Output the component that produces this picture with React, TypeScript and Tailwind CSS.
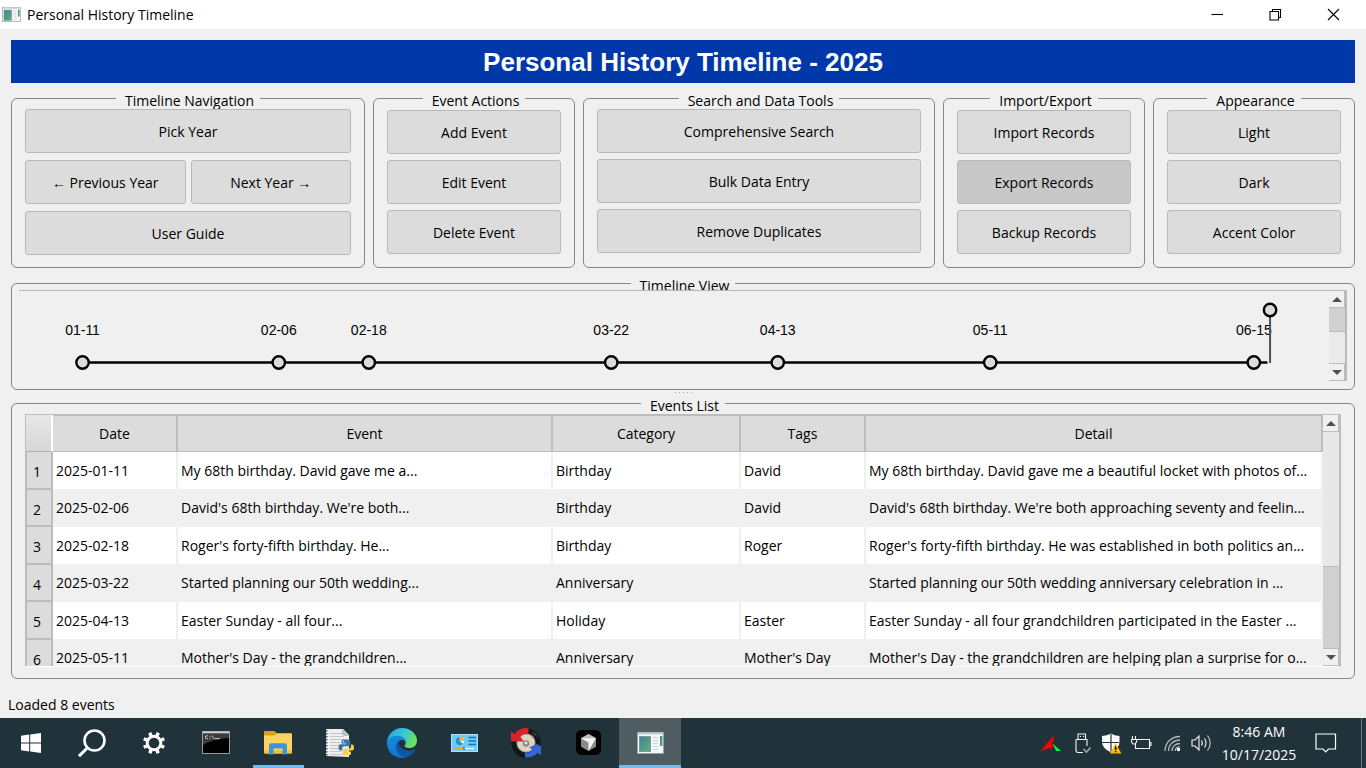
import type { ReactNode } from 'react';

const nodes = [
  { date: '01-11', x: 4.85 },
  { date: '02-06', x: 19.83 },
  { date: '02-18', x: 26.7 },
  { date: '03-22', x: 45.21 },
  { date: '04-13', x: 57.92 },
  { date: '05-11', x: 74.14 },
  { date: '06-15', x: 94.26 },
];

const events = [
  ['2025-01-11', 'My 68th birthday. David gave me a...', 'Birthday', 'David', 'My 68th birthday. David gave me a beautiful locket with photos of...'],
  ['2025-02-06', "David's 68th birthday. We're both...", 'Birthday', 'David', "David's 68th birthday. We're both approaching seventy and feelin..."],
  ['2025-02-18', "Roger's forty-fifth birthday. He...", 'Birthday', 'Roger', "Roger's forty-fifth birthday. He was established in both politics an..."],
  ['2025-03-22', 'Started planning our 50th wedding...', 'Anniversary', '', 'Started planning our 50th wedding anniversary celebration in ...'],
  ['2025-04-13', 'Easter Sunday - all four...', 'Holiday', 'Easter', 'Easter Sunday - all four grandchildren participated in the Easter ...'],
  ['2025-05-11', "Mother's Day - the grandchildren...", 'Anniversary', "Mother's Day", "Mother's Day - the grandchildren are helping plan a surprise for o..."],
];

function Group({ title, className = '', children }: { title: string; className?: string; children: ReactNode }) {
  return (
    <section className={`flex min-w-0 flex-col rounded-md border border-[#868686] ${className}`}>
      <h2 className="mx-auto -mt-2 w-fit bg-[#f0f0f0] pr-1.5 pl-[9px] leading-5">{title}</h2>
      {children}
    </section>
  );
}

function Btn({ children, active = false }: { children: ReactNode; active?: boolean }) {
  return (
    <button
      type="button"
      className={`h-11 min-w-0 flex-auto basis-11 rounded-[3px] border border-[#b8b8b8] pt-px ${active ? 'bg-[#c8c8c8]' : 'bg-[#dcdcdc]'}`}
    >
      {children}
    </button>
  );
}

function Stack({ className = '', children }: { className?: string; children: ReactNode }) {
  return <div className={`relative flex flex-col px-[13px] pb-3 ${className}`}>{children}</div>;
}

function Arrow({ down = false }: { down?: boolean }) {
  return (
    <button
      type="button"
      aria-label={down ? 'Scroll down' : 'Scroll up'}
      className="flex h-[17px] w-4 shrink-0 items-center justify-center border-r border-b border-[#bdbdbd] bg-[#f0f0f0]"
    >
      <svg width="10" height="5" viewBox="0 0 10 5" fill="#505050">
        <path d={down ? 'M0 0H10L5 5Z' : 'M0 5H10L5 0Z'} />
      </svg>
    </button>
  );
}

function WindowIcon({ w, h }: { w: number; h: number }) {
  return (
    <svg width={w} height={h} viewBox="0 0 27 22">
      <defs>
        <linearGradient id="pane" x1="0" y1="0" x2="1" y2="1">
          <stop offset="0" stopColor="#3f7f9e" />
          <stop offset="1" stopColor="#63b36f" />
        </linearGradient>
      </defs>
      <rect x="0.5" y="0.5" width="26" height="21" fill="#f6f6f6" stroke="#98a1a8" />
      <path d="M1 1.5H26" stroke="#c6ced4" strokeWidth="2" />
      <rect x="2.5" y="4.5" width="11" height="15" fill="url(#pane)" stroke="#7d989c" />
      <path d="M16 5.5h5M16 8.5h5M16 11.5h5M16 14.5h5M16 17.5h5" stroke="#cfcfcf" />
      <rect x="23" y="4" width="2.5" height="10" fill="url(#pane)" />
    </svg>
  );
}

function WindowsLogo() {
  return (
    <svg width="20" height="20" viewBox="0 0 20 20" fill="#fff">
      <path d="M0 2.8 8.2 1.6V9.5H0ZM9.2 1.5 20 0V9.5H9.2ZM0 10.5H8.2V18.4L0 17.2ZM9.2 10.5H20V20L9.2 18.5Z" />
    </svg>
  );
}

function SearchIcon() {
  return (
    <svg width="28" height="28" viewBox="0 0 28 28" fill="none" stroke="#fff" strokeWidth="2.6">
      <circle cx="16.5" cy="11.5" r="10" />
      <path d="M9.5 18.8 1 27.2" strokeWidth="3" />
    </svg>
  );
}

function GearIcon() {
  return (
    <svg width="24" height="24" viewBox="0 0 24 24" fill="none" stroke="#fff">
      <circle cx="12" cy="12" r="6.8" strokeWidth="3" />
      {[22.5, 67.5, 112.5, 157.5, 202.5, 247.5, 292.5, 337.5].map((a) => (
        <path key={a} d="M12 4.5V0.9" strokeWidth="3.4" transform={`rotate(${a} 12 12)`} />
      ))}
    </svg>
  );
}

function TerminalIcon() {
  return (
    <svg width="28" height="23" viewBox="0 0 28 23">
      <rect x="0.5" y="0.5" width="27" height="22" fill="#000" stroke="#9b9b9b" />
      <path d="M1 1.5H27" stroke="#c9ced2" strokeWidth="2" />
      <path d="M1 3H27V7Q10 8 1 14Z" fill="#3c3c3c" />
      <path d="M6 4.9H4.4Q3.4 4.9 3.4 6.1T4.4 7.5H6M8 5.2v.8M8 7v.8M9.7 4.5 12 7.8M12.5 7.7H18" stroke="#ddd" strokeWidth="0.9" fill="none" />
    </svg>
  );
}

function FolderIcon() {
  return (
    <svg width="28" height="24" viewBox="0 0 28 24">
      <path d="M0 1Q0 0 1 0H10.5L13 2.3H27Q28 2.3 28 3.3V10H0Z" fill="#e0a012" />
      <path d="M0 4.5H10.5L13 2.4H27Q28 2.4 28 3.4V21.5Q28 22.5 27 22.5H1Q0 22.5 0 21.5Z" fill="#ffd35c" />
      <path d="M0 19.5H28V21.5Q28 22.5 27 22.5H1Q0 22.5 0 21.5Z" fill="#f5bd36" />
      <path d="M5 23.5V14.5Q5 12.3 7.2 12.3H20.8Q23 12.3 23 14.5V23.5H18.5V17.5H9.5V23.5Z" fill="#3c95dc" />
    </svg>
  );
}

function PythonFileIcon() {
  return (
    <svg width="30" height="30" viewBox="0 0 30 30">
      <path d="M1 1H18L24 7V29L1 28Z" fill="#efefef" />
      <path d="M17 1 24 8H20Q17 8 17 5Z" fill="#bdbdbd" />
      <path d="M5 5.5H17M5 8.5H19M5 11.5H20M5 14.5H15M5 17.5H14M5 20.5H14M5 23.5H16M5 26.5H19" stroke="#c2c5c8" />
      <path d="M1.8 2V28" stroke="#555" strokeWidth="1.4" strokeDasharray="1.5 1.5" />
      <path d="M22 11.5H18.5Q16.5 11.5 16.5 13.5V15.5H21V16.3H15.5Q13.5 16.3 13.5 19.3T15.5 22.5H17.3V20.4Q17.3 18.2 19.5 18.2H23.4Q25.2 18.2 25.2 16.2V13.5Q25.2 11.5 22 11.5Z" fill="#3873a5" />
      <path d="M20.5 27.5H23.5Q26 27.5 26 25.5V23.4H21.5V22.6H27Q29 22.6 29 19.6T27 16.4H25.9V18.5Q25.9 20.7 23.6 20.7H19.6Q17.8 20.7 17.8 22.7V25.5Q17.8 27.5 20.5 27.5Z" fill="#ffce3d" />
      <circle cx="18.5" cy="13.5" r="0.8" fill="#fff" />
      <circle cx="24.2" cy="25.4" r="0.8" fill="#fff" />
    </svg>
  );
}

function EdgeIcon() {
  return (
    <svg width="30" height="30" viewBox="0 0 30 30">
      <defs>
        <linearGradient id="edgeTop" x1="0" y1="0.2" x2="1" y2="0.6">
          <stop offset="0" stopColor="#2aa3e0" />
          <stop offset="0.5" stopColor="#35c6d3" />
          <stop offset="1" stopColor="#6fe356" />
        </linearGradient>
        <linearGradient id="edgeLeft" x1="0" y1="0" x2="0.5" y2="1">
          <stop offset="0" stopColor="#1592df" />
          <stop offset="1" stopColor="#1270c8" />
        </linearGradient>
      </defs>
      <path d="M15 0C23.5 0 30 6 30 12.5C30 17 27 20 22.8 20C19.5 20 17.6 18.8 17.6 17.9C17.6 17.2 18.7 16.6 18.7 14.8C18.7 11.5 15.5 8.5 10.5 8.5C5.5 8.5 1.5 11.5 0 14.5C.5 6.2 7 0 15 0Z" fill="url(#edgeTop)" />
      <path d="M0 15C0 11 4.8 7.8 10.3 7.8C15.5 7.8 18.8 11 18.8 14.5C18.2 12.9 16.8 12 15 12C12 12 9.5 15 9.5 18.8C9.5 24 14 28.8 19.8 29.2C18.2 29.8 16.7 30 15 30C6.8 30 0 23.5 0 15Z" fill="url(#edgeLeft)" />
      <path d="M11.8 13.5C10.4 14.8 9.2 17 9.2 19.3C9.2 24.2 13.3 29 19.5 29.3C23.3 28 26.4 25.5 28.1 22.6C28.5 21.8 28 21.3 27.2 21.7C25.7 22.4 24.2 22.7 22.5 22.7C16.5 22.7 11.6 18.7 11.6 15Z" fill="#0d57a6" />
    </svg>
  );
}

function PanelIcon() {
  return (
    <svg width="27" height="18" viewBox="0 0 27 18">
      <rect x="0.5" y="0.5" width="26" height="17" fill="#6ecbf7" stroke="#a9e2fb" />
      <circle cx="8.8" cy="7" r="4.3" fill="#f3fbff" />
      <path d="M8.8 7V2.7A4.3 4.3 0 1 0 12 9.8Z" fill="#2493d6" />
      <path d="M8.8 7V2.7A4.3 4.3 0 0 1 13.1 7Z" fill="#f7b52c" />
      <path d="M17.5 3.5H25M17.5 7H25M17.5 10.5H25" stroke="#1976b8" strokeWidth="1.6" />
      <path d="M4 14.5H13" stroke="#f6a21c" strokeWidth="1.6" />
      <path d="M13 14.5H23" stroke="#eefaff" strokeWidth="1.4" />
      <path d="M13 13v3" stroke="#1976b8" strokeWidth="1.4" />
    </svg>
  );
}

function SyncDiscIcon() {
  return (
    <svg width="30" height="30" viewBox="0 0 30 30">
      <circle cx="15" cy="15" r="12.2" fill="none" stroke="#15181a" strokeWidth="5" />
      <circle cx="15" cy="15" r="9" fill="#ddd4c2" />
      <circle cx="15" cy="15" r="9" fill="none" stroke="#b5ab9a" />
      <path d="M22 4.500 26 8.500M20 6.500 23 9.500" stroke="#777" />
      <circle cx="15" cy="15.5" r="3.2" fill="#898989" />
      <circle cx="15" cy="15" r="1.4" fill="#e8e8e8" />
      <path d="M0 3.500 3.500 6Q9 -1 17.500 .3V5.500Q11.500 5.500 9.500 9L13 13.500H0Z" fill="#d8242b" />
      <path d="M30 27.500 26.800 24.800Q22 30 14 29.500V24.800Q19.500 25 21.300 21.700L18.300 19.300 26 16 30 18.500Z" fill="#3467d5" />
    </svg>
  );
}

function CubeIcon() {
  return (
    <svg width="25" height="25" viewBox="0 0 25 25">
      <rect width="25" height="25" rx="5.5" fill="#000" />
      <path d="M12.5 4 20 8.300V16.700L12.500 21 5 16.700V8.300Z" fill="#8b8b8b" />
      <path d="M12.500 4 20 8.300 12.500 10 5 8.300Z" fill="#bdbdbd" />
      <path d="M5 8.300H20L12.500 21V12.600Z" fill="#f2f2f2" />
    </svg>
  );
}

const apps: { name: string; icon: ReactNode; state?: 'open' | 'active' }[] = [
  { name: 'Search', icon: <SearchIcon /> },
  { name: 'Settings', icon: <GearIcon /> },
  { name: 'Command Prompt', icon: <TerminalIcon /> },
  { name: 'File Explorer', icon: <FolderIcon />, state: 'open' },
  { name: 'Python', icon: <PythonFileIcon /> },
  { name: 'Edge', icon: <EdgeIcon /> },
  { name: 'Control Panel', icon: <PanelIcon /> },
  { name: 'Backup', icon: <SyncDiscIcon /> },
  { name: 'Cursor', icon: <CubeIcon /> },
  { name: 'Timeline', icon: <WindowIcon w={27} h={22} />, state: 'active' },
];

function Tray() {
  return (
    <div className="flex items-center">
      <svg width="20" height="15" viewBox="0 0 20 15" className="mr-[14px]">
        <path d="M0 15 12 0 13 3.500 10.500 7 11 15 9.500 11.800Z" fill="#f00" />
        <path d="M0 15 11.500 2 10.500 7.500 13 10 7 12Z" fill="#f00" />
        <path d="M11.500 7.500 20 15H15Z" fill="#0f2" />
      </svg>
      <svg width="16" height="21" viewBox="0 0 16 21" fill="none" stroke="#f4f4f4" strokeWidth="1.1" className="mr-[10px]">
        <path d="M3 6V1H10.500V6M1 6.500H12V13M1 6.500V17Q1 19.500 3 19.500H8" />
        <path d="M5 3.500h1M8 3.500h1" />
        <path d="M8.500 16 11.500 19 15.500 14.500" stroke="#9ba5a8" strokeWidth="1.6" />
      </svg>
      <svg width="21" height="21" viewBox="0 0 21 21" className="mr-[9px]">
        <path d="M10 .5Q13 2.800 18.500 3V9Q18.500 15 10 19.500 1 15 1 9V3Q6.500 2.800 10 .5Z" fill="#fff" />
        <path d="M10 1V19M1 9.500H18" stroke="#22333a" strokeWidth="1.2" />
        <path d="M14.500 10 20.500 20.500H9Z" fill="#f9b911" />
        <path d="M14.700 13.500V17M14.700 18V19.300" stroke="#111" strokeWidth="1.500" />
      </svg>
      <svg width="21" height="15" viewBox="0 0 21 15" fill="none" stroke="#f4f4f4" strokeWidth="1.1" className="mr-3">
        <path d="M6 3.500H18.500V12.500H4.500V8M18.500 6.500H20V9.500H18.500" />
        <path d="M1.500 0V3M4.500 0V3M.5 3.500H5.500V6L4 8H2L.5 6Z" />
      </svg>
      <svg width="17" height="17" viewBox="0 0 17 17" fill="none" stroke="#aeb6b9" strokeWidth="1.300" className="mr-[10px]">
        <path d="M1 16C1 7.500 7.500 1.500 16 1.500M4.500 16C4.500 9.500 9.500 5 16 5M8 16C8 11.500 11.500 8.500 16 8.500" />
        <path d="M11.200 16C11.200 13.500 13 11.800 16 11.800" />
        <circle cx="14.500" cy="14.500" r="1.700" fill="#fff" stroke="none" />
      </svg>
      <svg width="21" height="18" viewBox="0 0 21 18" fill="none" stroke="#f4f4f4" strokeWidth="1.100" className="mr-[7px]">
        <path d="M1 6H4L8 2V16L4 12H1Z" />
        <path d="M10.500 6.500Q12.200 9 10.500 11.500M13.500 4.500Q16.500 9 13.500 13.500" />
        <path d="M16.500 1.500Q22 9 16.500 16.500" stroke="#bcc4c7" />
      </svg>
      <div className="flex w-20 flex-col items-center whitespace-nowrap leading-[23px] text-white">
        <span>8:46 AM</span>
        <span>10/17/2025</span>
      </div>
      <button type="button" aria-label="Notifications" className="ml-4">
        <svg width="22" height="20" viewBox="0 0 22 20" fill="none" stroke="#fff" strokeWidth="1.200">
          <path d="M1 1H20.500V16H13.500L10.700 18.800 8 16H1Z" />
        </svg>
      </button>
      <div className="mr-1 ml-6 h-[50px] w-px bg-[#6d797e]" />
    </div>
  );
}

export default function App() {
  return (
    <div className="flex h-screen flex-col overflow-hidden bg-[#f0f0f0] font-['Open_Sans','Noto_Sans',sans-serif] text-[14px] leading-5 text-black">
      <header className="flex h-[29px] shrink-0 items-center bg-white pl-[2px]">
        <WindowIcon w={19} h={15} />
        <span className="ml-1.5">Personal History Timeline</span>
        <div className="ml-auto flex h-full items-center pr-1">
          {[
            ['Minimize', 'M.5 6.500H12'],
            ['Restore', 'M1 3.500H9.500V12H1ZM3.500 3.500V1.500H11.500V9.500H9.500'],
            ['Close', 'M1 1 12 12M12 1 1 12'],
          ].map(([name, d]) => (
            <button key={name} type="button" aria-label={name} className="flex h-full w-[58px] items-center justify-center">
              <svg width="13" height="13" viewBox="0 0 13 13" fill="none" stroke="#000" strokeWidth="1.1">
                <path d={d} />
              </svg>
            </button>
          ))}
        </div>
      </header>

      <main className="flex min-h-0 flex-1 flex-col px-[11px] pt-[11px]">
        <h1 className="h-[43px] shrink-0 bg-[#0037a9] text-center font-['Liberation_Sans',Arial,sans-serif] text-[26px] leading-[44px] font-bold text-white">
          Personal History Timeline - 2025
        </h1>

        <div className="mt-[15px] grid shrink-0 grid-cols-[354fr_202fr_352fr_202fr_202fr] gap-2">
          <Group title="Timeline Navigation">
            <Stack className="-mt-0.5 gap-[7px]">
              <Btn>Pick Year</Btn>
              <div className="grid grid-cols-2 gap-[5px]">
                <Btn>← Previous Year</Btn>
                <Btn>Next Year →</Btn>
              </div>
              <Btn>User Guide</Btn>
            </Stack>
          </Group>
          <Group title="Event Actions">
            <Stack className="-mt-px gap-1.5">
              <Btn>Add Event</Btn>
              <Btn>Edit Event</Btn>
              <Btn>Delete Event</Btn>
            </Stack>
          </Group>
          <Group title="Search and Data Tools">
            <Stack className="-mt-0.5 gap-1.5">
              <Btn>Comprehensive Search</Btn>
              <Btn>Bulk Data Entry</Btn>
              <Btn>Remove Duplicates</Btn>
            </Stack>
          </Group>
          <Group title="Import/Export">
            <Stack className="-mt-px gap-1.5">
              <Btn>Import Records</Btn>
              <Btn active>Export Records</Btn>
              <Btn>Backup Records</Btn>
            </Stack>
          </Group>
          <Group title="Appearance">
            <Stack className="-mt-px gap-1.5">
              <Btn>Light</Btn>
              <Btn>Dark</Btn>
              <Btn>Accent Color</Btn>
            </Stack>
          </Group>
        </div>

        <Group title="Timeline View" className="mt-[15px] shrink-0">
          <div className="relative mx-[7px] -mt-1.5 mb-2 flex h-[91px] border-t border-r-2 border-[#b9b9b9] bg-[#f0f0f0]">
            <svg className="h-[90px] min-w-0 flex-1 font-['Liberation_Sans',Arial,sans-serif] text-[14px]" role="img" aria-label="Timeline">
              <line x1="4.85%" y1="71.5" x2="95.3%" y2="71.5" stroke="#000" strokeWidth="2.6" />
              {nodes.map((n) => (
                <g key={n.date}>
                  <circle cx={`${n.x}%`} cy="71.5" r="6.2" fill="#dcdcdc" stroke="#000" strokeWidth="2.4" />
                  <text x={`${n.x}%`} y="44" textAnchor="middle">{n.date}</text>
                </g>
              ))}
              <line x1="95.5%" y1="19" x2="95.5%" y2="72" stroke="#505050" strokeWidth="2" />
              <circle cx="95.5%" cy="19" r="6.2" fill="#dcdcdc" stroke="#000" strokeWidth="2.4" />
            </svg>
            <div className="flex w-4 flex-col bg-[#eaeaea]">
              <Arrow />
              <div className="h-6 border-b border-[#bdbdbd] bg-[#d0d0d0]" />
              <div className="flex-1 border-b border-[#bdbdbd]" />
              <Arrow down />
            </div>
          </div>
        </Group>

        <div className="flex h-[13px] shrink-0 justify-center gap-[3px] pt-0.5">
          {[0, 1, 2, 3, 4].map((i) => (
            <i key={i} className="h-px w-px bg-[#a5a5a5]" />
          ))}
        </div>

        <Group title="Events List" className="min-h-0 flex-1">
          <div className="relative mx-[13px] -mt-0.5 mb-[11px] flex min-h-0 flex-1 border-t border-r-2 border-b border-l border-[#bcbcbc] border-b-white">
            <div className="min-w-0 flex-1 overflow-hidden">
              <table className="w-full table-fixed border-separate border-spacing-0 whitespace-nowrap">
                <colgroup>
                  <col className="w-[27px]" />
                  <col className="w-[125px]" />
                  <col className="w-[375px]" />
                  <col className="w-[188px]" />
                  <col className="w-[125px]" />
                  <col />
                </colgroup>
                <thead>
                  <tr className="h-[37px]">
                    <td className="border-r-2 border-b border-r-white border-b-[#b0b0b0] bg-linear-to-b from-[#e8e8e8] to-[#d6d6d6]" />
                    {['Date', 'Event', 'Category', 'Tags', 'Detail'].map((h) => (
                      <th key={h} scope="col" className="border-t border-r-2 border-b border-[#bcbcbc] bg-[#dcdcdc] p-0 pt-px font-normal">
                        {h}
                      </th>
                    ))}
                  </tr>
                </thead>
                <tbody>
                  {events.map((row, i) => (
                    <tr key={row[0]} className="h-[38px] odd:bg-white even:h-[37px]">
                      <th scope="row" className="border-r-2 border-b-2 border-l border-[#bcbcbc] bg-[#dcdcdc] p-0 pt-1 pr-1 font-normal">
                        {i + 1}
                      </th>
                      {row.map((cell, j) => (
                        <td key={j} className="overflow-hidden border-r-2 border-b border-[#f0f0f0] p-0 pl-[3px]">
                          {cell}
                        </td>
                      ))}
                    </tr>
                  ))}
                </tbody>
              </table>
            </div>
            <div className="flex w-4 shrink-0 flex-col bg-[#e8e8e8]">
              <Arrow />
              <div className="flex-1 border-b border-[#bdbdbd]" />
              <div className="h-[82px] border-b border-[#bdbdbd] bg-[#d0d0d0]" />
              <Arrow down />
            </div>
          </div>
        </Group>
      </main>

      <div className="flex h-[39px] shrink-0 items-center pt-3 pl-2">Loaded 8 events</div>

      <footer className="flex h-[50px] shrink-0 items-center justify-between bg-[#21333a]">
        <nav className="flex h-full">
          <button type="button" aria-label="Start" className="flex w-[61px] items-center justify-center">
            <WindowsLogo />
          </button>
          {apps.map((a) => (
            <button
              key={a.name}
              type="button"
              aria-label={a.name}
              className={`flex w-[62px] flex-col items-center ${a.state === 'active' ? 'bg-[#4f5c61]' : ''}`}
            >
              <span className="flex flex-1 items-center pt-0.5">{a.icon}</span>
              <span className={`h-[3px] ${a.state === 'active' ? 'w-full bg-[#76b9ed]' : a.state === 'open' ? 'w-[51px] bg-[#76b9ed]' : ''}`} />
            </button>
          ))}
        </nav>
        <Tray />
      </footer>
    </div>
  );
}
